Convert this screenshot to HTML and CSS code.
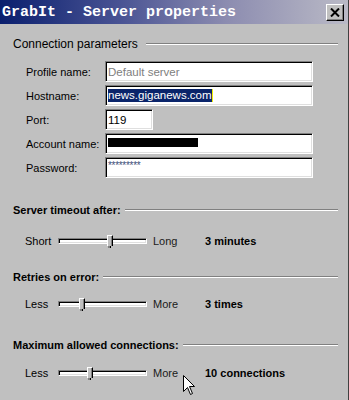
FILE: index.html
```html
<!DOCTYPE html>
<html lang="en">
<head>
    <meta charset="UTF-8">
    <title>GrabIt - Server properties</title>
    <link rel="stylesheet" href="styles.css">
</head>
<body>
    <div class="window">
        <div class="titlebar">
            <span class="title">GrabIt - Server properties</span>
            <div class="close-btn">
                <svg width="10" height="9" viewBox="0 0 10 9">
                    <path d="M1 0.5 L9 8.5 M9 0.5 L1 8.5" stroke="#000" stroke-width="2" fill="none"/>
                </svg>
            </div>
        </div>

        <div class="content">
            <div class="group-head first">
                <span class="head-text">Connection parameters</span>
                <span class="rule"></span>
            </div>
            <div class="form">
                <label>Profile name:</label>
                <div class="field"><span class="muted">Default server</span></div>
                <label>Hostname:</label>
                <div class="field"><span class="selected">news.giganews.com</span><span class="caret"></span></div>
                <label>Port:</label>
                <div class="field port">119</div>
                <label>Account name:</label>
                <div class="field"><span class="blackout"></span></div>
                <label>Password:</label>
                <div class="field"><span class="stars">*********</span></div>
            </div>

            <div class="group-head bold timeout">
                <span class="head-text">Server timeout after:</span>
                <span class="rule"></span>
            </div>
            <div class="slider-row row-timeout">
                <span>Short</span>
                <div class="track"><span class="thumb" style="left: 48px"></span></div>
                <span class="end">Long</span>
                <span class="value">3 minutes</span>
            </div>

            <div class="group-head bold retries">
                <span class="head-text">Retries on error:</span>
                <span class="rule"></span>
            </div>
            <div class="slider-row row-retries">
                <span>Less</span>
                <div class="track"><span class="thumb" style="left: 20px"></span></div>
                <span class="end">More</span>
                <span class="value">3 times</span>
            </div>

            <div class="group-head bold conns">
                <span class="head-text">Maximum allowed connections:</span>
                <span class="rule"></span>
            </div>
            <div class="slider-row row-conns">
                <span>Less</span>
                <div class="track"><span class="thumb" style="left: 28px"></span></div>
                <span class="end">More</span>
                <span class="value">10 connections</span>
            </div>
        </div>

        <svg class="cursor" width="13" height="21" viewBox="0 0 13 21">
            <path d="M0.5 0.5 L0.5 16.5 L4.5 12.5 L7.5 19.5 L9.5 18.5 L6.5 11.5 L11.5 11.5 Z" fill="#fff" stroke="#000" stroke-width="1"/>
        </svg>
    </div>
</body>
</html>
```

FILE: styles.css
```css
body {
    margin: 0;
    background-color: #c0c0c0;
    font-family: 'Liberation Sans', Arial, sans-serif;
    font-size: 11px;
    color: #000;
}
.window {
    position: relative;
    width: 348px;
    height: 400px;
    border-right: 1px solid #404040;
    background-color: #c0c0c0;
    overflow: hidden;
}
.titlebar {
    height: 24px;
    display: flex;
    align-items: center;
    justify-content: space-between;
    padding: 0 4px 0 2px;
    background: linear-gradient(to right, #0a1f6e 0%, #4a5494 35%, #8c8cb0 65%, #babac6 100%);
}
.title {
    font-family: 'Liberation Mono', 'Courier New', monospace;
    font-weight: bold;
    font-size: 15px;
    color: #fff;
}
.close-btn {
    width: 16px;
    height: 15px;
    display: flex;
    align-items: center;
    justify-content: center;
    background-color: #c0c0c0;
    border-top: 1px solid #fff;
    border-left: 1px solid #fff;
    border-right: 1px solid #000;
    border-bottom: 1px solid #000;
    box-shadow: inset -1px -1px #808080;
}
.content {
    padding: 0 10px 0 13px;
}
.group-head {
    display: flex;
    align-items: center;
    height: 14px;
    line-height: 14px;
}
.group-head.first {
    margin-top: 13px;
    font-size: 12px;
}
.group-head.bold {
    font-weight: bold;
}
.group-head .head-text {
    padding-right: 8px;
}
.group-head.bold .head-text {
    padding-right: 4px;
}
.rule {
    flex: 1;
    height: 0;
    border-top: 1px solid #808080;
    border-bottom: 1px solid #fff;
}
.form {
    display: grid;
    grid-template-columns: 79px 208px;
    row-gap: 3px;
    margin-top: 10px;
    padding-left: 13px;
    align-items: center;
}
.field {
    height: 21px;
    box-sizing: border-box;
    background-color: #fff;
    border-top: 1px solid #808080;
    border-left: 1px solid #808080;
    border-bottom: 1px solid #fff;
    border-right: 1px solid #fff;
    box-shadow: inset 1px 1px #000, inset -1px -1px #dfdfdf;
    padding: 0 2px;
    display: flex;
    align-items: center;
    font-size: 11.5px;
}
.field.port {
    width: 48px;
}
.muted {
    color: #808080;
}
.selected {
    background-color: #0a246a;
    color: #fff;
    line-height: 13px;
}
.caret {
    width: 1px;
    height: 13px;
    background-color: #f0f000;
}
.blackout {
    display: inline-block;
    width: 90px;
    height: 9px;
    margin-top: -2px;
    background-color: #000;
}
.stars {
    font-size: 10px;
    color: #40507a;
    align-self: flex-start;
    margin-top: 2px;
    letter-spacing: -0.3px;
}
.group-head.timeout {
    margin-top: 25px;
}
.group-head.retries {
    margin-top: 22px;
}
.group-head.conns {
    margin-top: 27px;
}
.slider-row {
    display: grid;
    grid-template-columns: 33px 89px 58px auto;
    align-items: center;
    height: 14px;
    padding-left: 12px;
}
.row-timeout {
    margin-top: 17px;
}
.row-retries {
    margin-top: 13px;
}
.row-conns {
    margin-top: 14px;
}
.slider-row .end {
    padding-left: 6px;
    color: #1a1a1a;
}
.slider-row .value {
    font-weight: bold;
}
.track {
    position: relative;
    height: 6px;
    box-sizing: border-box;
    background-color: #fff;
    border-top: 1px solid #808080;
    border-left: 1px solid #808080;
    border-bottom: 1px solid #fff;
    border-right: 1px solid #fff;
    box-shadow: inset 1px 1px #000, inset -1px -1px #dfdfdf;
}
.thumb {
    position: absolute;
    top: -4px;
    width: 4px;
    height: 10px;
    background-color: #c0c0c0;
    border-left: 1px solid #fff;
    border-top: 1px solid #fff;
    border-right: 1px solid #000;
    box-shadow: inset -1px 0 #808080;
}
.thumb::after {
    content: "";
    position: absolute;
    left: 0;
    bottom: -2px;
    width: 2px;
    height: 2px;
    border-right: 1px solid #000;
    background-color: #808080;
}
.cursor {
    position: absolute;
    left: 183px;
    top: 375px;
}
```
